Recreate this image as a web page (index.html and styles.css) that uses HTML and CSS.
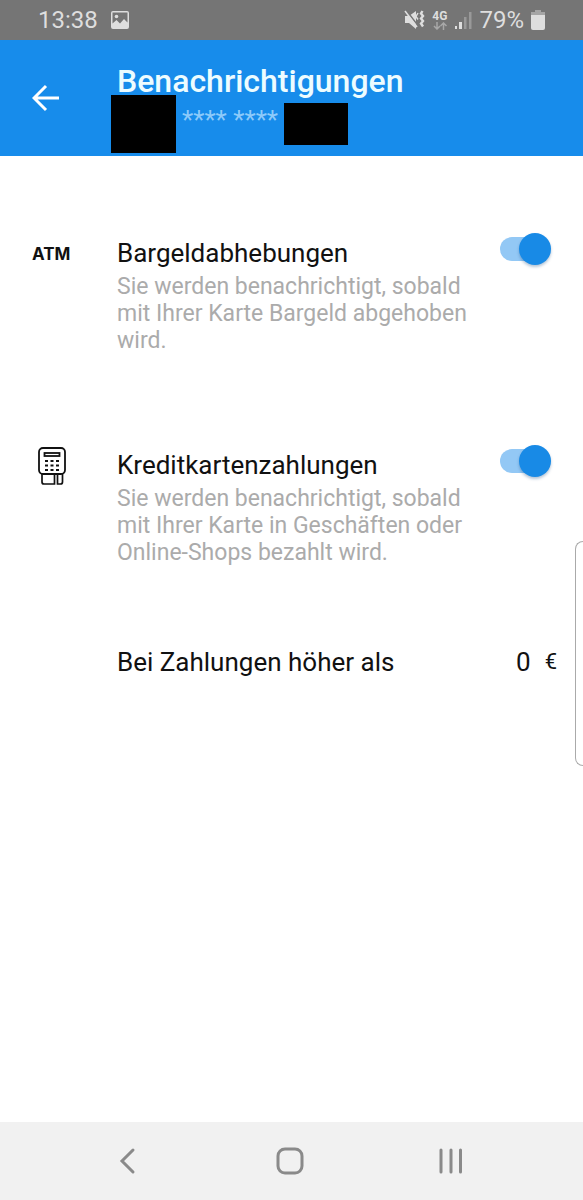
FILE: index.html
```html
<!DOCTYPE html>
<html lang="de">
<head>
<meta charset="utf-8">
<meta name="viewport" content="width=device-width, initial-scale=1">
<title>Benachrichtigungen</title>
<link rel="stylesheet" href="styles.css">
</head>
<body>
<div class="screen">
  <div class="status">
    <span class="status-text">13:38</span>
    <svg class="picture-icon" width="20" height="20" viewBox="0 0 20 20" aria-hidden="true"><path fill-rule="evenodd" d="M3 1h14a2 2 0 0 1 2 2v14a2 2 0 0 1-2 2H3a2 2 0 0 1-2-2V3a2 2 0 0 1 2-2zM2.500 2.500v11l4-3.500 3.500 3.500 4-4.500 3.500 3.500v-10z"/><circle cx="6.500" cy="6.500" r="1.800"/></svg>
    <div class="status-right">
      <svg width="21" height="22" viewBox="0 0 21 22" aria-hidden="true"><path d="M1 7h4l7-5v18L5 14H1z"/><path d="M2 1l13 17" fill="none" stroke="#757575" stroke-width="1.600"/><path d="M1 2l12 16" fill="none" stroke="#dedede" stroke-width="1.500"/><path d="M14 4l-2 3.500 2 3" fill="none" stroke="#dedede" stroke-width="1.500"/><path d="M18.500 2l-1.500 2.500 2 2.500-2 2.500 2 2.500-2 2.500 2 3" fill="none" stroke="#dedede" stroke-width="2.400"/></svg>
      <div class="network">
        <span class="network-type">4G</span>
        <svg width="14" height="8" viewBox="0 0 14 8" aria-hidden="true"><path d="M4 0v7M1 4l3 3 3-3M10.500 8V1M7.500 4l3-3 3 3" fill="none" stroke="#a8a8a8" stroke-width="1.500"/></svg>
      </div>
      <svg width="18" height="20" viewBox="0 0 18 20" aria-hidden="true"><path d="M1 16h2v3H1zM5 12h3v7H5z"/><path d="M10 7h2.500v12H10zM15 2h2.500v17H15z" fill="#999"/></svg>
      <span class="status-text">79%</span>
      <svg width="14" height="20" viewBox="0 0 14 20" aria-hidden="true"><path d="M4 0h6v2h4v4H0V2h4z" fill="#a5a5a5"/><path d="M0 5h14v13a2 2 0 0 1-2 2H2a2 2 0 0 1-2-2z"/></svg>
    </div>
  </div>

  <header class="header">
    <button class="back" type="button" aria-label="Zurück"><svg width="28" height="28" viewBox="0 0 28 28" aria-hidden="true"><path d="M14 2L2 14l12 12M2 14h25" fill="none" stroke="#fff" stroke-width="3"/></svg></button>
    <div class="heading">
      <h1 class="title">Benachrichtigungen</h1>
      <div class="card-number"><span class="mask mask-first"></span><span class="stars">**** ****</span><span class="mask mask-last"></span></div>
    </div>
  </header>

  <main class="content">
    <section class="setting">
      <span class="atm">ATM</span>
      <div class="setting-text">
        <label class="setting-name" for="cash">Bargeldabhebungen</label>
        <p class="setting-info" id="cash-info">Sie werden benachrichtigt, sobald mit Ihrer Karte Bargeld abgehoben wird.</p>
      </div>
      <input class="switch" id="cash" type="checkbox" role="switch" aria-describedby="cash-info" checked>
    </section>
    <section class="setting">
      <svg class="terminal" width="30" height="40" viewBox="0 0 30 40" fill="none" stroke="#111" aria-hidden="true"><rect x="2" y="2" width="26" height="26" rx="4" stroke-width="1.800"/><rect x="7.500" y="7" width="15" height="3" stroke-width="1.800"/><path d="M8 15h3M13.500 15h3M19 15h3M8 19.500h3M13.500 19.500h3M19 19.500h3M8 24h3M13.500 24h3M19 24h3" stroke-width="2"/><path d="M5 28v8q0 2 2 2h10.500V28M20.500 28v10h3q2 0 2-2v-8" stroke-width="1.700"/></svg>
      <div class="setting-text">
        <label class="setting-name" for="payments">Kreditkartenzahlungen</label>
        <p class="setting-info" id="payments-info">Sie werden benachrichtigt, sobald mit Ihrer Karte in Geschäften oder Online-Shops bezahlt wird.</p>
      </div>
      <input class="switch" id="payments" type="checkbox" role="switch" aria-describedby="payments-info" checked>
    </section>
    <div class="threshold">
      <label class="setting-name" for="amount">Bei Zahlungen höher als</label>
      <input class="amount" id="amount" type="text" inputmode="numeric" value="0">
      <span class="currency">€</span>
    </div>
  </main>

  <div class="edge-handle"></div>

  <nav class="navbar" aria-label="System">
    <button class="nav-button" type="button" aria-label="Zurück"><svg width="28" height="28" viewBox="0 0 28 28" aria-hidden="true"><path d="M19 3L8 14l11 11"/></svg></button>
    <button class="nav-button" type="button" aria-label="Startseite"><svg width="28" height="28" viewBox="0 0 28 28" aria-hidden="true"><rect x="2" y="2" width="24" height="24" rx="7"/></svg></button>
    <button class="nav-button" type="button" aria-label="Letzte Apps"><svg width="28" height="28" viewBox="0 0 28 28" aria-hidden="true"><path d="M4 3v22M14 3v22M23.500 3v22"/></svg></button>
  </nav>
</div>
</body>
</html>
```
FILE: styles.css
```css
* { box-sizing: border-box; }
body { margin: 0; font-family: Roboto, "Liberation Sans", sans-serif; color: #111; background: #fff; }
h1, p { margin: 0; }
button { border: 0; padding: 0; background: none; cursor: pointer; }
svg { display: block; flex: none; }

.screen { position: relative; display: flex; flex-direction: column; min-height: 100vh; }

.status { display: flex; align-items: center; height: 40px; padding: 0 38px; background: #757575; color: #dedede; fill: #dedede; }
.status-text { font-size: 24px; line-height: 40px; }
.picture-icon { margin-left: 12px; }
.status-right { display: flex; align-items: center; gap: 7px; margin-left: auto; }
.network { display: flex; flex-direction: column; align-items: center; }
.network-type { font-size: 12px; line-height: 12px; font-weight: 700; }

.header { display: grid; grid-template-columns: 111px 1fr; height: 116px; background: #178ceb; color: #fff; }
.back { display: flex; align-items: center; padding-left: 32px; }
.heading { padding-top: 25px; }
.title { padding-left: 6px; font-size: 32px; line-height: 32px; font-weight: 500; color: #edfcff; }
.card-number { display: flex; align-items: center; gap: 6px; margin-top: -2px; font-size: 26px; line-height: 30px; color: #8dcafa; }
.stars { padding-bottom: 8px; }
.mask { background: #000; }
.mask-first { width: 65px; height: 58px; }
.mask-last { width: 64px; height: 42px; }

.content { flex: 1; padding: 80px 26px 0 32px; }
.setting { display: grid; grid-template-columns: 85px 1fr 58px; margin-bottom: 94px; }
.atm { padding-top: 6px; font-size: 17px; line-height: 24px; font-weight: 700; font-family: Inter, sans-serif; }
.terminal { margin: -2px 0 0 5px; }
.setting-text { padding-right: 16px; }
.setting-name { display: block; font-size: 26px; line-height: 34px; }
.setting-info { padding-top: 3px; font-size: 23px; line-height: 27px; color: #ababab; }

.switch { appearance: none; position: relative; width: 52px; height: 32px; margin: -4px 0 0; cursor: pointer; }
.switch::before { content: ""; position: absolute; left: 1px; top: 5px; width: 46px; height: 24px; border-radius: 12px; background: #c4c4c4; }
.switch::after { content: ""; position: absolute; left: 0; top: 1px; width: 32px; height: 32px; border-radius: 50%; background: #f5f5f5; box-shadow: 0 2px 3px rgb(0 60 120 / 30%); }
.switch:checked::before { background: #93c8f5; }
.switch:checked::after { left: 20px; background: #188ae6; }

.threshold { display: flex; align-items: center; margin: -15px 0 0 85px; }
.amount { width: 48px; margin-left: auto; border: 0; padding: 0; background: none; font: inherit; font-size: 26px; color: inherit; text-align: right; }
.currency { margin-left: 14px; font-size: 22px; line-height: 34px; }

.edge-handle { position: absolute; right: 0; top: 541px; width: 8px; height: 225px; border: 1px solid #aaa; border-right: 0; border-radius: 8px 0 0 8px; }

.navbar { display: flex; justify-content: center; gap: 23%; height: 78px; padding-right: 4px; background: #f1f1f1; }
.nav-button { width: 28px; flex: none; fill: none; stroke: #8a8a8a; stroke-width: 3; stroke-linecap: round; }
.nav-button svg { margin: auto; }
button:focus-visible, input:focus-visible { outline: 2px solid #0b5cab; outline-offset: 2px; }
```
